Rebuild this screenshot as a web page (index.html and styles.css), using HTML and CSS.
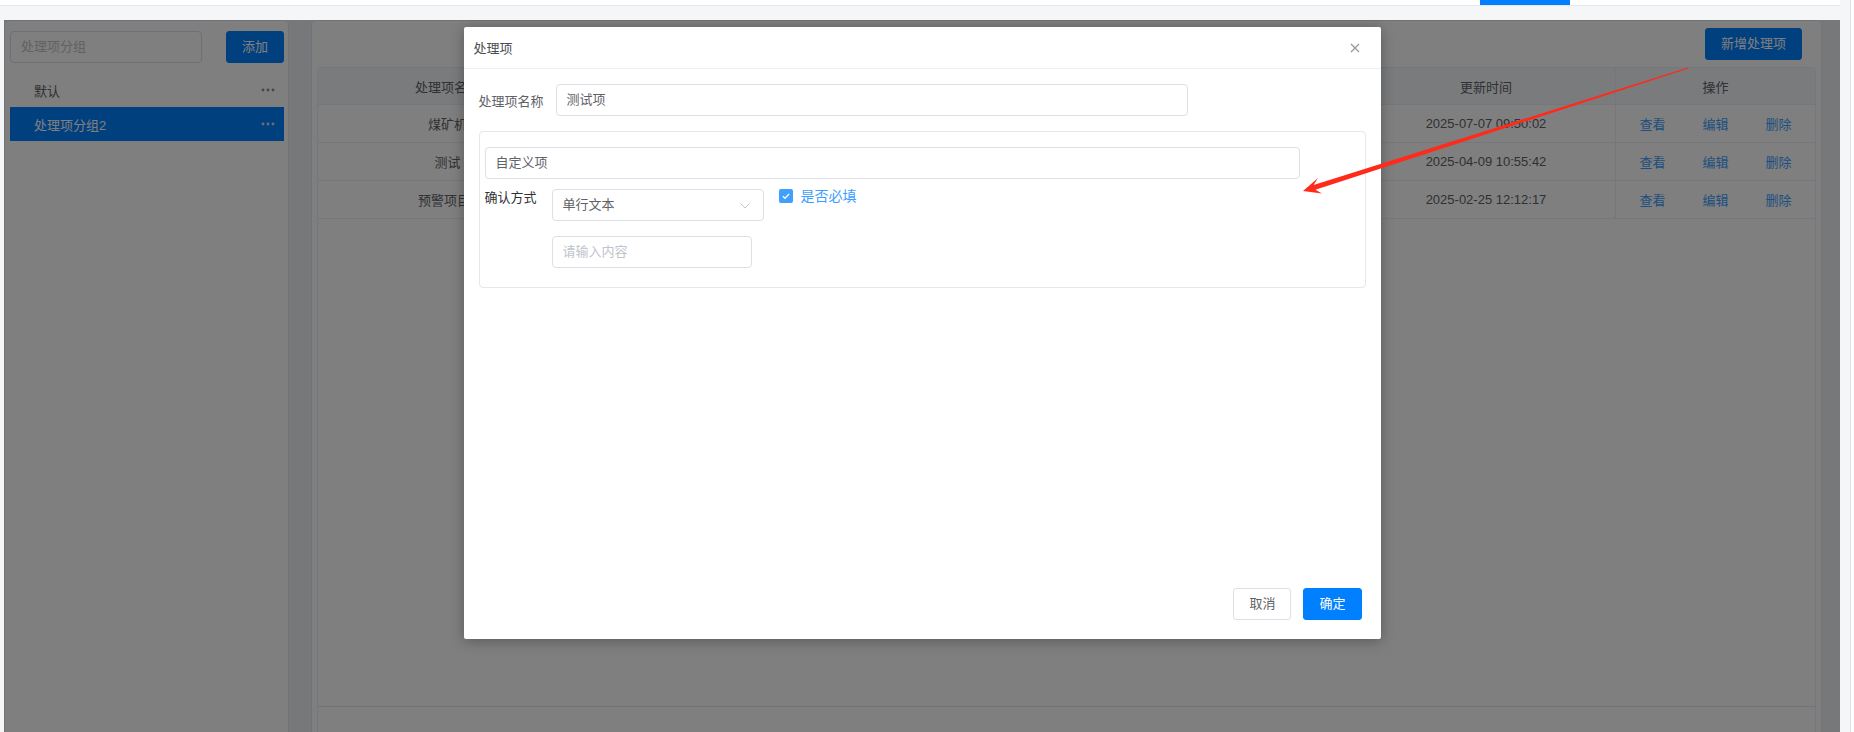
FILE: index.html
```html
<!DOCTYPE html>
<html lang="zh-CN">
<head>
<meta charset="utf-8">
<title>处理项</title>
<link rel="stylesheet" href="styles.css">
</head>
<body>
<div class="app">
  <div class="main">
    <div class="topbar">
      <div class="tab-active"></div>
    </div>
    <div class="workspace">
      <aside class="group-panel">
        <div class="group-search">
          <div class="input group-input placeholder">处理项分组</div>
          <button class="btn btn-primary">添加</button>
        </div>
        <ul class="group-list">
          <li class="group-item"><span>默认</span><svg class="more" viewBox="0 0 14 4" width="14" height="4"><circle cx="2" cy="2" r="1.4"/><circle cx="7" cy="2" r="1.4"/><circle cx="12" cy="2" r="1.4"/></svg></li>
          <li class="group-item active"><span>处理项分组2</span><svg class="more" viewBox="0 0 14 4" width="14" height="4"><circle cx="2" cy="2" r="1.4"/><circle cx="7" cy="2" r="1.4"/><circle cx="12" cy="2" r="1.4"/></svg></li>
        </ul>
      </aside>

      <section class="item-panel">
        <div class="panel-toolbar">
          <button class="btn btn-primary">新增处理项</button>
        </div>
        <div class="table-wrap">
          <div class="table-body">
            <div class="t-row t-head">
              <div class="cell">处理项名称</div>
              <div class="cell">处理项分组</div>
              <div class="cell">创建人</div>
              <div class="cell">更新时间</div>
              <div class="cell">操作</div>
            </div>
            <div class="t-row">
              <div class="cell">煤矿机</div>
              <div class="cell">处理项分组2</div>
              <div class="cell">admin</div>
              <div class="cell">2025-07-07 09:50:02</div>
              <div class="cell ops"><a class="link">查看</a><a class="link">编辑</a><a class="link">删除</a></div>
            </div>
            <div class="t-row">
              <div class="cell">测试</div>
              <div class="cell">处理项分组2</div>
              <div class="cell">admin</div>
              <div class="cell">2025-04-09 10:55:42</div>
              <div class="cell ops"><a class="link">查看</a><a class="link">编辑</a><a class="link">删除</a></div>
            </div>
            <div class="t-row">
              <div class="cell">预警项目1</div>
              <div class="cell">处理项分组2</div>
              <div class="cell">admin</div>
              <div class="cell">2025-02-25 12:12:17</div>
              <div class="cell ops"><a class="link">查看</a><a class="link">编辑</a><a class="link">删除</a></div>
            </div>
          </div>
          <div class="table-footer"></div>
        </div>
      </section>

      <div class="mask">
        <div class="dialog">
          <div class="dialog-header">
            <span class="dialog-title">处理项</span>
            <svg class="close" viewBox="0 0 10 10" width="10" height="10"><path d="M1 1L9 9M9 1L1 9"/></svg>
          </div>
          <div class="dialog-body">
            <div class="form-row">
              <label class="form-label">处理项名称</label>
              <div class="input name-input">测试项</div>
            </div>
            <div class="group-box">
              <div class="input custom-input">自定义项</div>
              <div class="confirm-row">
                <span class="confirm-label">确认方式</span>
                <div class="input select">
                  <span>单行文本</span>
                  <svg class="chevron" viewBox="0 0 10 6" width="10" height="6"><path d="M0.5 0.5L5 5L9.5 0.5"/></svg>
                </div>
                <label class="checkbox">
                  <span class="check-box"><svg viewBox="0 0 14 14" width="14" height="14"><path d="M3.8 7.2L6 9.3L10.2 4.9"/></svg></span>
                  <span class="check-text">是否必填</span>
                </label>
              </div>
              <div class="input content-input placeholder">请输入内容</div>
            </div>
          </div>
          <div class="dialog-footer">
            <button class="btn btn-default">取消</button>
            <button class="btn btn-primary">确定</button>
          </div>
        </div>
      </div>
    </div>
  </div>
  <div class="rail"></div>
</div>

<svg class="annotation" viewBox="0 0 1854 732" width="1854" height="732">
  <polygon points="1303,191 1318,178 1313.6,185 1688,67.4 1688.4,68.6 1315.4,189.8 1322,193.5"/>
</svg>
</body>
</html>
```

FILE: styles.css
```css
* {
  box-sizing: border-box;
}

html, body {
  margin: 0;
  padding: 0;
  height: 732px;
  overflow: hidden;
}

body {
  background: #f5f6f8;
  font-family: "Liberation Sans", "Noto Sans CJK SC", sans-serif;
  font-size: 13px;
  color: #606266;
  position: relative;
}

.app {
  display: flex;
  height: 732px;
}

.main {
  width: 1840px;
  display: flex;
  flex-direction: column;
}

.rail {
  width: 14px;
  background: #f5f6f8;
  border-right: 3px solid #ffffff;
  box-shadow: inset -1px 0 0 #dfe1e6;
}

.topbar {
  height: 6px;
  background: #ffffff;
  border-bottom: 1px solid #e4e7ed;
  padding-left: 1480px;
}

.tab-active {
  width: 90px;
  height: 5px;
  background: #0080ff;
}

.workspace {
  position: relative;
  margin: 14px 0 0 4px;
  height: 712px;
  display: flex;
  gap: 22px;
  padding-right: 18px;
  background: #eef0f2;
  overflow: hidden;
}

/* left group panel */
.group-panel {
  width: 285px;
  height: 760px;
  background: #ffffff;
  border: 1px solid #e4e7ed;
  border-radius: 4px;
  padding: 10px 4px 0 5px;
}

.group-search {
  display: flex;
  justify-content: space-between;
  align-items: center;
}

.input {
  height: 32px;
  border: 1px solid #dcdfe6;
  border-radius: 4px;
  background: #ffffff;
  padding: 0 10px;
  line-height: 30px;
  color: #606266;
  white-space: nowrap;
}

.placeholder {
  color: #c0c4cc;
}

.group-input {
  width: 192px;
}

.btn {
  height: 32px;
  padding: 0 15px;
  border-radius: 3px;
  font-family: inherit;
  font-size: 13px;
  line-height: 30px;
  border: 1px solid transparent;
  cursor: pointer;
}

.btn-primary {
  background: #0080ff;
  border-color: #0080ff;
  color: #ffffff;
}

.btn-default {
  background: #ffffff;
  border-color: #dcdfe6;
  color: #606266;
}

.group-list {
  list-style: none;
  margin: 10px 0 0;
  padding: 0;
}

.group-item {
  height: 34px;
  display: flex;
  align-items: center;
  justify-content: space-between;
  padding: 0 9px 0 24px;
  color: #606266;
  fill: #8a8d93;
}

.group-item.active {
  background: #0080ff;
  color: #ffffff;
  fill: #d8dce3;
}

.more {
  display: block;
}

/* right panel */
.item-panel {
  flex: 1;
  height: 760px;
  background: #ffffff;
  border: 1px solid #e4e7ed;
  border-radius: 4px;
  padding: 7px 5px 0 5px;
  display: flex;
  flex-direction: column;
}

.panel-toolbar {
  display: flex;
  justify-content: flex-end;
  padding-right: 14px;
}

.table-wrap {
  margin-top: 7px;
  flex: 1;
  border: 1px solid #ebeef5;
  border-radius: 4px;
  overflow: hidden;
}

.table-body {
  height: 639px;
  border-bottom: 1px solid #e4e7ed;
}

.t-row {
  display: grid;
  grid-template-columns: 260px 390px 389px 259px 199px;
  height: 38px;
  border-bottom: 1px solid #ebeef5;
}

.t-head {
  height: 37px;
  background: #f5f7fa;
}

.cell {
  display: flex;
  align-items: center;
  justify-content: center;
  border-right: 1px solid #ebeef5;
  color: #606266;
  white-space: nowrap;
  overflow: hidden;
}

.cell:last-child {
  border-right: none;
}

.ops {
  gap: 37px;
}

.link {
  color: #409eff;
  cursor: pointer;
}

/* mask + dialog */
.mask {
  position: absolute;
  inset: 0;
  background: rgba(0, 0, 0, 0.5);
  display: flex;
  justify-content: center;
  align-items: flex-start;
  padding-top: 7px;
  z-index: 5;
}

.dialog {
  width: 917px;
  height: 612px;
  background: #ffffff;
  border-radius: 2px;
  box-shadow: 0 2px 14px rgba(0, 0, 0, 0.3);
  display: flex;
  flex-direction: column;
}

.dialog-header {
  height: 42px;
  padding: 0 21px 0 10px;
  border-bottom: 1px solid #ebeef5;
  display: flex;
  align-items: center;
  justify-content: space-between;
}

.dialog-title {
  color: #4a4c50;
  font-size: 13px;
}

.close {
  stroke: #909399;
  stroke-width: 1.1;
  fill: none;
}

.dialog-body {
  flex: 1;
  padding: 15px 15px 0 15px;
}

.form-row {
  display: flex;
  align-items: center;
}

.form-label {
  width: 77px;
  color: #606266;
}

.name-input {
  width: 632px;
}

.group-box {
  margin-top: 15px;
  width: 887px;
  border: 1px solid #e4e7ed;
  border-radius: 4px;
  padding: 15px 5px 19px 5px;
}

.custom-input {
  width: 815px;
}

.confirm-row {
  display: flex;
  align-items: flex-start;
  margin-top: 10px;
}

.confirm-label {
  width: 52px;
  margin-right: 15px;
  line-height: 18px;
  color: #303133;
}

.select {
  width: 212px;
  display: flex;
  align-items: center;
  justify-content: space-between;
  padding-right: 13px;
}

.chevron {
  stroke: #c0c4cc;
  stroke-width: 1;
  fill: none;
  margin-top: 2px;
}

.checkbox {
  display: flex;
  align-items: center;
  margin-left: 15px;
}

.check-box {
  width: 14px;
  height: 14px;
  border-radius: 2px;
  background: #409eff;
  display: block;
}

.check-box svg {
  display: block;
  stroke: #ffffff;
  stroke-width: 1.3;
  fill: none;
}

.check-text {
  margin-left: 8px;
  color: #409eff;
  font-size: 14px;
  line-height: 14px;
}

.content-input {
  margin: 15px 0 0 67px;
  width: 200px;
}

.dialog-footer {
  display: flex;
  justify-content: flex-end;
  gap: 12px;
  padding: 0 19px 19px 0;
}

/* red annotation arrow */
.annotation {
  position: absolute;
  top: 0;
  left: 0;
  z-index: 20;
  pointer-events: none;
  fill: #ff2a1a;
}
```
